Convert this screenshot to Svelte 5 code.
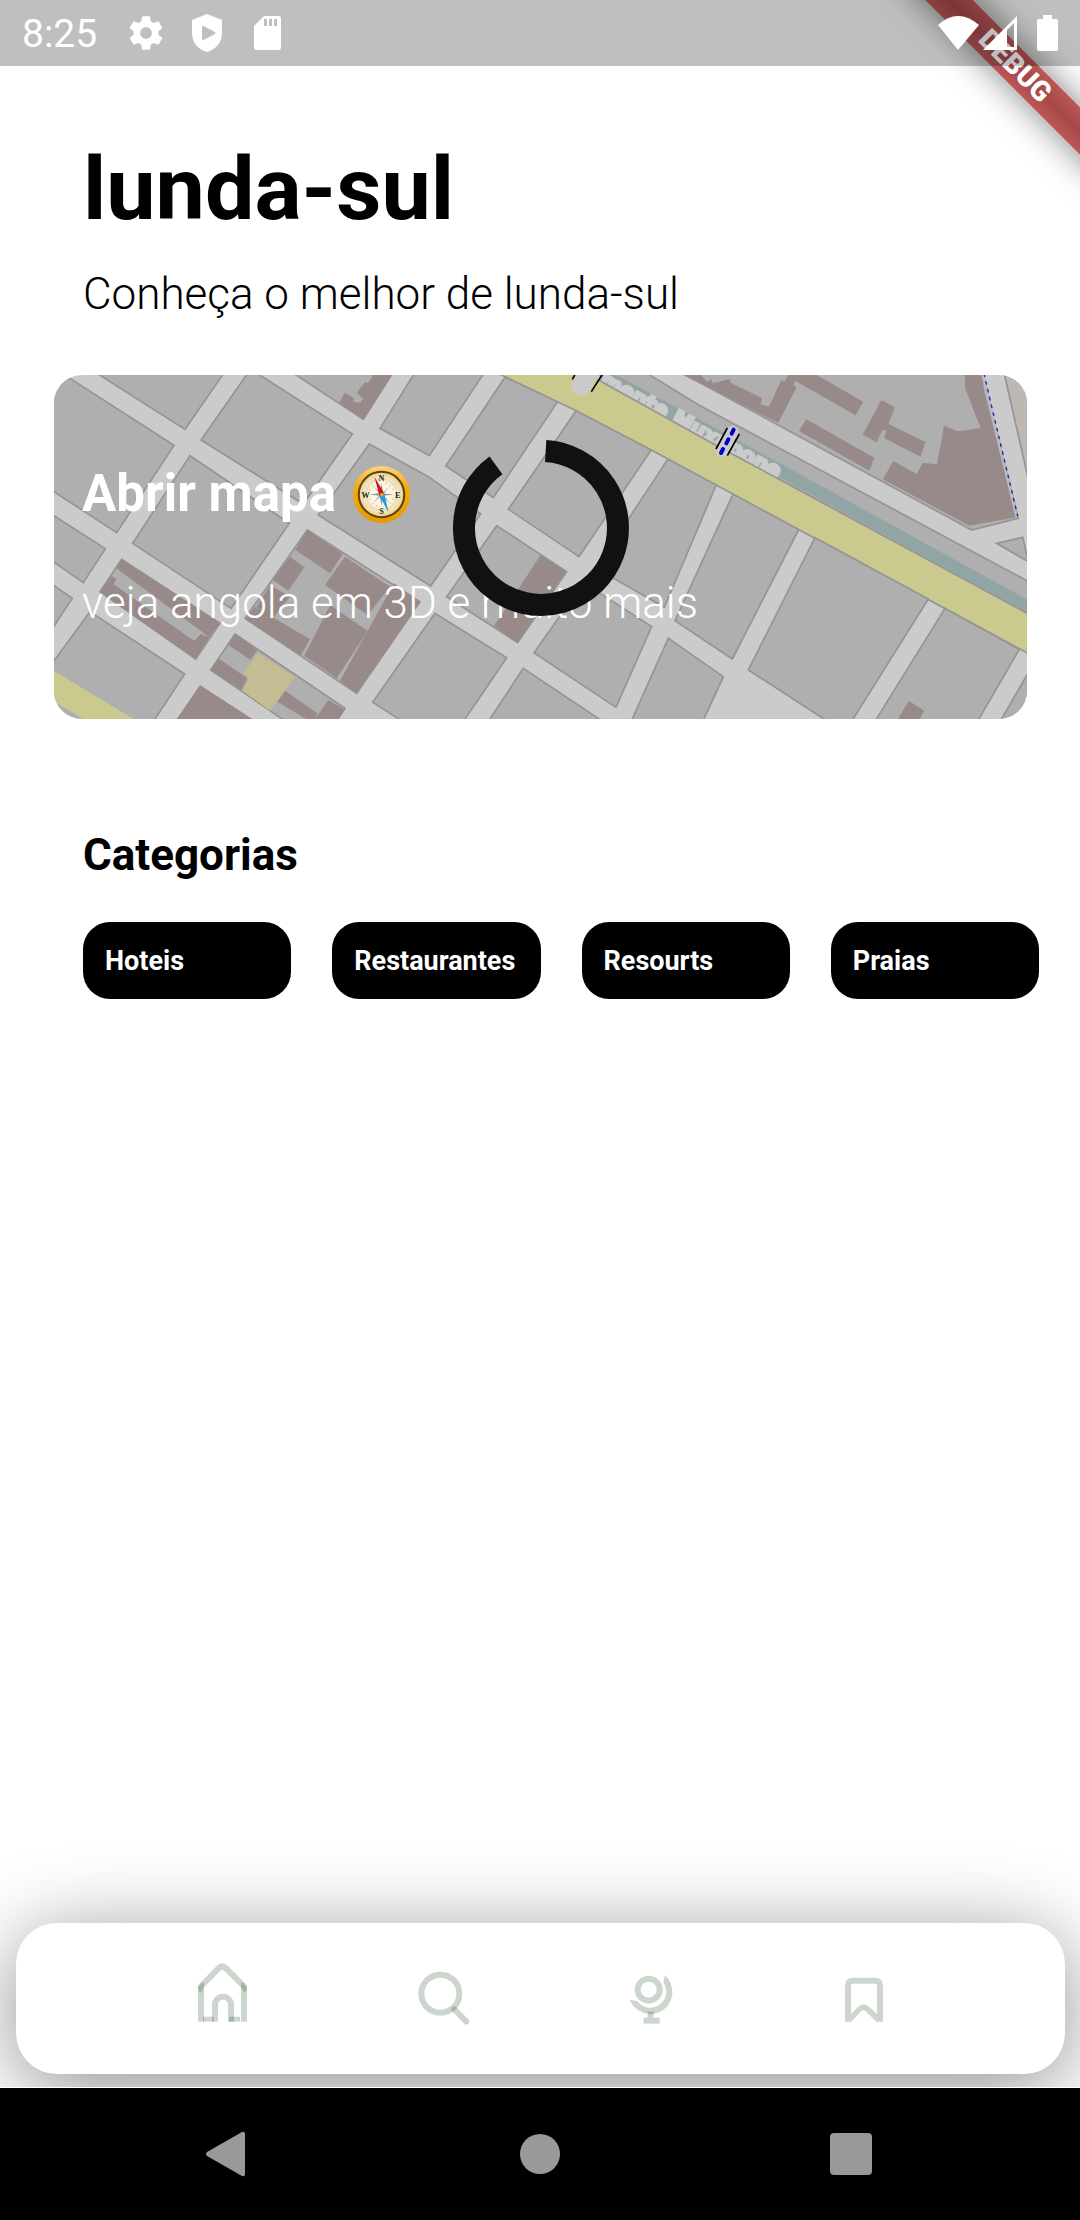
<script>
  const categories = ['Hoteis', 'Restaurantes', 'Resourts', 'Praias'];
  const ticks = [22, 45, 67, 112, 135, 157, 202, 225, 247, 292, 315, 337];
</script>

<div class="screen">
  <div class="banner" aria-hidden="true"><span>DEBUG</span></div>

  <header class="status">
    <time>8:25</time>
    <div class="left-icons">
      <svg viewBox="0 0 24 24"><path d="M19.43 12.98c.04-.32.07-.64.07-.98s-.03-.66-.07-.98l2.11-1.65c.19-.15.24-.42.12-.64l-2-3.46c-.12-.22-.39-.3-.61-.22l-2.49 1c-.52-.4-1.08-.73-1.69-.98l-.38-2.65C14.46 2.18 14.25 2 14 2h-4c-.25 0-.46.18-.49.42l-.38 2.65c-.61.25-1.17.59-1.69.98l-2.49-1c-.23-.09-.49 0-.61.22l-2 3.46c-.13.22-.07.49.12.64l2.11 1.65c-.04.32-.07.65-.07.98s.03.66.07.98l-2.11 1.65c-.19.15-.24.42-.12.64l2 3.46c.12.22.39.3.61.22l2.49-1c.52.4 1.08.73 1.69.98l.38 2.65c.03.24.24.42.49.42h4c.25 0 .46-.18.49-.42l.38-2.65c.61-.25 1.17-.59 1.69-.98l2.49 1c.23.09.49 0 .61-.22l2-3.46c.12-.22.07-.49-.12-.64l-2.11-1.65zM12 15.5c-1.93 0-3.5-1.57-3.5-3.5s1.57-3.5 3.5-3.5 3.5 1.57 3.5 3.5-1.57 3.5-3.5 3.5z" /></svg>
      <svg viewBox="0 0 40 40"><path fill-rule="evenodd" d="M20 1 35 7V20C35 30 28 37 20 39 12 37 5 30 5 20V7ZM15 14V26Q15 27.500 16.500 27L28 21Q29 20 28 19L16.500 13Q15 12.500 15 14Z" /></svg>
      <svg viewBox="0 0 40 40"><path fill-rule="evenodd" d="M16 3H31Q33 3 33 6V34Q33 37 31 37H9Q6 37 6 34V13ZM16 6V13H19V6ZM21 6V13H24V6ZM26 6V13H29V6Z" /></svg>
    </div>
    <div class="right-icons">
      <svg class="wifi" viewBox="0 0 41 34"><path d="M0 9Q20-9 41 9L20 34Z" /></svg>
      <svg class="signal" viewBox="0 0 34 34"><path fill-rule="evenodd" d="M34 0V34H0ZM24 14V31H31V7Z" /></svg>
      <svg class="battery" viewBox="0 0 21 36"><path d="M6 0H15V4H19Q21 4 21 6V34Q21 36 19 36H2Q0 36 0 34V6Q0 4 2 4H6Z" /></svg>
    </div>
  </header>

  <main>
    <h1>lunda-sul</h1>
    <p class="subtitle">Conheça o melhor de lunda-sul</p>

    <button class="map-card" type="button">
      <svg class="map" viewBox="0 0 2919 1032" preserveAspectRatio="xMidYMid slice" aria-hidden="true">
        <g transform="translate(-42 -45)">
          <g class="block">
            <path d="M0 0 90 55 402 256 230 518 0 368Z" />
            <path d="M160 33 435 208 556 33Z" />
            <path d="M628 33 483 240 790 432 937 222 640 33Z" />
            <path d="M750 33 970 178 1062 33Z" />
            <path d="M450 287 278 550 573 745 748 490Z" />
            <path d="M0 440 196 566 130 668 0 578Z" />
            <path d="M0 648 97 715 0 862Z" />
            <path d="M245 598 180 695 467 897 540 790Z" />
            <path d="M150 755 434 942 330 1100 0 1100V960Z" />
            <path d="M585 822 512 930 760 1100 880 1100 915 1045Z" />
            <path d="M802 510 615 775 950 1000 1140 725Z" />
            <path d="M988 252 835 465 1172 678 1322 462 1165 350Z" />
            <path d="M1128 33 1020 205 1168 287 1336 33Z" />
            <path d="M1185 760 998 1027 1100 1092 1265 1092 1400 893Z" />
          </g>
          <g class="building">
            <path d="M1056 45 970 178 898 128 914 98 942 114 938 124 960 128 970 116 950 98 975 66 984 70 1000 45Z" />
            <path d="M245 598 540 790 508 832 229 625Z" />
            <path d="M180 695 215 648 230 658 220 672 463 843 482 822 508 832 467 897Z" />
            <path d="M480 975 400 1092H660Z" />
            <path d="M585 822 652 870 632 900 565 855Z" />
            <path d="M535 895 622 955 605 990 512 930Z" />
            <path d="M735 992 832 1060 820 1090 712 1025Z" />
            <path d="M865 1020 913 1048 885 1092 815 1092Z" />
            <path d="M802 510 908 582 870 640 766 570Z" />
            <path d="M750 590 793 622 745 692 698 660Z" />
            <path d="M690 675 750 710 692 782 650 740Z" />
            <path d="M645 740 810 838 783 885 615 778Z" />
            <path d="M915 590 1050 680 983 765 855 675Z" />
            <path d="M870 735 983 813 890 955 793 887Z" />
            <path d="M1062 670 1140 725 950 1000 900 962Z" />
          </g>
          <path class="tan" d="M652 878 765 950 690 1052 607 992 628 955 612 940Z" />
          <path class="avenue" d="M0 908 280 1077 310 1100H170L0 1000Z" />
        </g>

        <g transform="translate(978 -45)">
          <g class="block">
            <path d="M375 52 197 318 340 413 535 122Z" />
            <path d="M590 150 385 448 597 590 815 268Z" />
            <path d="M865 295 648 625 853 742 1010 372Z" />
            <path d="M350 497 200 710 413 848 560 635Z" />
            <path d="M610 668 462 878 708 1042 815 800Z" />
            <path d="M430 925 320 1092H680Z" />
            <path d="M865 835 750 1092H965L1030 950Z" />
            <path d="M1060 400 885 782 1057 897 1257 507Z" />
            <path d="M640 33H790L960 137 1941 662 1990 690V790L1000 250Z" />
          </g>
          <path class="building" d="M482 585 558 635 413 848 342 798Z" />
          <path class="water" d="M665 40H700L960 180 1200 310 1990 745V785L1150 325 655 62Z" />
          <path class="avenue-edge" d="M360 40 590 150 815 268 1060 400 1960 886" />
          <text class="street" transform="translate(656 72) rotate(28)">mente Muxapone</text>
          <path class="avenue" d="M360 33 360 40 590 150 815 268 1060 400 1960 886V770L1090 300 1005 254 655 60 630 33Z" />
          <path class="edge" d="M655 60 1005 254 1090 300 1960 770" />
          <path class="bridge-wide" d="M604 77 634 20" />
          <path class="rail" d="M577 58 588 38M634 95 672 35" />
        </g>

        <g transform="translate(1938 -45)">
          <g class="block">
            <path d="M-70 33 0 68 815 510 955 475 845 33Z" />
            <path d="M345 533 145 930 395 1092H450L685 717Z" />
            <path d="M735 745 520 1092H828L958 868Z" />
            <path d="M1000 912 896 1092H1000Z" />
            <path d="M890 550 968 532 985 605Z" />
            <path class="beige" d="M911 33 990 380V33Z" />
          </g>
          <g class="building">
            <path d="M-60 40 0 68 170 156 235 188 290 82 280 75 285 62 467 166 490 125 350 45 330 33H270L255 62 243 62 207 140 182 133 187 115 92 68 90 57 38 70 35 58 20 66 0 40Z" />
            <path d="M319 178 523 293 508 332 297 213Z" />
            <path d="M544 120 585 142 565 192 677 246 662 290 553 235 558 212 547 210 530 247 488 224Z" />
            <path d="M795 33H845L852 90 948 472 808 497 548 358 580 303 650 342 668 308 711 313 732 197 773 214 842 204 795 85Z" />
            <path d="M626 1022 673 1052 650 1092H586Z" />
          </g>
          <path class="path-bed" d="M848 40 862 100 950 470" />
          <path class="footpath" d="M852 40 868 110 953 468" />
          <path class="bridge" d="M98 215 65 273" />
          <path class="rail" d="M82 204 48 267M118 222 82 287" />
          <path class="dots" d="M101 209 95 221M85 238 79 250M69 267 63 279" />
        </g>
      </svg>

      <span class="card-title">
        Abrir mapa
        <svg class="compass" viewBox="0 0 168 168" aria-hidden="true">
          <defs>
            <linearGradient id="rim" x1="0" y1="0" x2="0" y2="1">
              <stop offset="0" stop-color="#ffd37a" />
              <stop offset=".35" stop-color="#f5ab12" />
              <stop offset="1" stop-color="#e89a00" />
            </linearGradient>
            <radialGradient id="face">
              <stop offset="0" stop-color="#ffffff" />
              <stop offset=".6" stop-color="#fdf1d4" />
              <stop offset="1" stop-color="#e9cf91" />
            </radialGradient>
          </defs>
          <circle cx="84" cy="84" r="84" fill="url(#rim)" />
          <circle cx="84" cy="84" r="67" fill="url(#face)" stroke="#5b450c" stroke-width="6" />
          <circle cx="84" cy="84" r="46" fill="none" stroke="#c9c3b3" stroke-width="2" />
          {#each ticks as angle}
            <path d="M84 44V50" stroke="#b5b0a5" stroke-width="2" transform="rotate({angle} 84 84)" />
          {/each}
          <path d="M84 50 89 79 108 60 91 81 120 84 91 88 108 108 88 91 84 118 79 91 60 108 77 88 48 84 77 80 60 60 80 78Z" fill="#8e989c" />
          <path d="M63 32 92 80 78 87Z" fill="#d8101c" />
          <path d="M105 138 78 87 92 80Z" fill="#1b9fe0" />
          <circle cx="85" cy="84" r="5" fill="#f6a21a" />
          <g class="points">
            <text x="84" y="43">N</text>
            <text x="84" y="142">S</text>
            <text x="37" y="93">W</text>
            <text x="132" y="93">E</text>
          </g>
        </svg>
      </span>
      <span class="card-text">veja angola em 3D e muito mais</span>
      <svg class="spinner" viewBox="0 0 528 528" aria-hidden="true"><path d="M278 33A231 231 0 1 1 129 76" /></svg>
    </button>

    <h2>Categorias</h2>
    <div class="chips">
      {#each categories as name}
        <button type="button">{name}</button>
      {/each}
    </div>
  </main>

  <nav class="tabs">
    <button type="button" aria-label="Início">
      <svg viewBox="15 61 288 288">
        <path class="fill" d="M84 273V168L96 156H102V273Z" />
        <path class="fill" d="M231 273V168L219 156H213V273Z" />
        <path class="fill" d="M92 187Q84 182 84 168 86 162 90 157L143 103Q157 93 171 103L225 157Q231 163 231 176L224 187Q219 176 209 167L161 119Q157 115 153 119L106 166Q96 176 92 187Z" />
        <path d="M135 273V222A24 24 0 0 1 183 222V273" />
        <path class="fill" d="M99 258H132V273H99Z" />
        <path class="fill" d="M177 258H210V273H177Z" />
      </svg>
    </button>
    <button type="button" aria-label="Pesquisar">
      <svg viewBox="656 61 288 288">
        <circle cx="810" cy="189" r="57" />
        <path class="round" d="M852 236 888 273" />
      </svg>
    </button>
    <button type="button" aria-label="Explorar">
      <svg viewBox="7 61 288 288">
        <circle cx="147" cy="177" r="33" />
        <path class="fill" d="M89 207 112 211Q130 232 152 231A48 50 0 0 0 200 180Q200 166 191 156L196 133Q218 155 218 187A67 63 0 0 1 150 250Q110 246 89 207Z" />
        <path class="fill" d="M144 243H162V261H144Z" />
        <path class="fill" d="M132 261H180V279H132Z" />
      </svg>
    </button>
    <button type="button" aria-label="Guardados">
      <svg viewBox="648 61 288 288">
        <path class="fill" d="M735 273V165Q735 141 759 141H825Q849 141 849 165V273H829L796 241Q790 236 784 241L754 273ZM753 250 778 225Q790 216 803 225L831 250V162Q831 159 828 159H756Q753 159 753 162Z" />
      </svg>
    </button>
  </nav>

  <footer class="system">
    <button type="button" aria-label="Voltar"><svg viewBox="0 0 48 48"><path d="M3 22 38 2Q41 1 41 4V44Q41 47 38 46L3 26Q1 24 3 22Z" /></svg></button>
    <button type="button" aria-label="Tela inicial"><svg viewBox="0 0 48 48"><circle cx="24" cy="24" r="20" /></svg></button>
    <button type="button" aria-label="Recentes"><svg viewBox="0 0 48 48"><rect x="2" y="3" width="42" height="42" rx="4" /></svg></button>
  </footer>
</div>

<style>
  :global(body) {
    margin: 0;
    background: #fff;
    font-family: Roboto, sans-serif;
    color: #000;
  }
  .screen {
    position: relative;
    display: flex;
    flex-direction: column;
    min-height: 100vh;
    overflow: hidden;
  }
  button {
    margin: 0;
    padding: 0;
    border: 0;
    background: none;
    font: inherit;
    color: inherit;
    text-align: left;
    cursor: pointer;
  }
  svg { display: block; }

  .status {
    position: relative;
    display: flex;
    align-items: center;
    height: 66px;
    padding: 0 22px;
    background: rgba(0, 0, 0, .25);
    color: #fff;
    fill: #fff;
  }
  .status time { font-size: 39px; line-height: 48px; padding-top: 2px; }
  .left-icons { display: flex; gap: 21px; margin-left: 29px; }
  .left-icons svg { width: 40px; height: 40px; }
  .right-icons { display: flex; align-items: center; margin-left: auto; }
  .wifi { width: 41px; height: 34px; }
  .signal { width: 34px; height: 34px; margin-left: 4px; }
  .battery { width: 21px; height: 36px; margin-left: 20px; }

  .banner {
    position: absolute;
    top: 0;
    right: 0;
    width: 280px;
    height: 280px;
    overflow: hidden;
  }
  .banner span {
    position: absolute;
    top: 49px;
    right: -85px;
    width: 300px;
    transform: rotate(45deg);
    background: linear-gradient(#bb5757, #a64848, #bb5757);
    box-shadow: 0 0 34px rgba(0, 0, 0, .5);
    color: #fff;
    font-size: 28px;
    font-weight: 900;
    line-height: 34px;
    text-align: center;
  }

  main { flex: 1; padding-top: 71px; }
  h1, h2, p { margin: 0; }
  h1 { padding: 0 83px; font-size: 88px; font-weight: 700; line-height: 104px; }
  .subtitle { padding: 27px 83px 0; font-size: 44px; font-weight: 300; line-height: 52px; }

  .map-card {
    position: relative;
    display: flex;
    flex-direction: column;
    width: calc(100% - 107px);
    margin: 55px 53px 0 54px;
    padding: 89px 28px 90px;
    border-radius: 28px;
    overflow: hidden;
    background: #cbcbcb;
    color: #fff;
  }
  .map { position: absolute; inset: 0; width: 100%; height: 100%; }
  .block { fill: #afafaf; stroke: #949494; stroke-width: 5; }
  .beige { fill: #bdb8b2; }
  .building { fill: #998a8a; }
  .tan { fill: #c4bc92; }
  .water { fill: #91a5a5; }
  .avenue { fill: #cbca8e; }
  .avenue-edge { fill: none; stroke: #949494; stroke-width: 10; }
  .edge { fill: none; stroke: #949494; stroke-width: 5; }
  .street { fill: #cbcbcb; stroke: #cbcbcb; stroke-width: 8; font: 700 62px "DejaVu Sans", sans-serif; }
  .bridge, .bridge-wide { fill: none; stroke: #cbcbcb; stroke-width: 36; stroke-linecap: round; }
  .bridge-wide { stroke-width: 60; }
  .rail { fill: none; stroke: #000; stroke-width: 5; }
  .dots { fill: none; stroke: #0000cb; stroke-width: 12; stroke-linecap: round; }
  .path-bed { fill: none; stroke: #b9b9b9; stroke-width: 9; }
  .footpath { fill: none; stroke: #1f1fc4; stroke-width: 4; stroke-dasharray: 11 13; }

  .card-title {
    position: relative;
    display: flex;
    align-items: center;
    gap: 17px;
    font-size: 51px;
    font-weight: 700;
    line-height: 60px;
  }
  .compass { width: 57px; height: 57px; }
  .points { font: 700 24px "Liberation Serif", serif; fill: #222; text-anchor: middle; }
  .card-text { position: relative; margin-top: 53px; font-size: 44px; font-weight: 300; line-height: 52px; }
  .spinner {
    position: absolute;
    top: 65px;
    left: 50%;
    width: 176px;
    height: 176px;
    transform: translateX(-50%);
    fill: none;
    stroke: #111;
    stroke-width: 66;
  }

  h2 { padding: 110px 83px 0; font-size: 44px; font-weight: 700; line-height: 52px; }
  .chips {
    display: grid;
    grid-template-columns: repeat(4, minmax(0, 1fr));
    gap: 41px;
    padding: 41px 41px 0 83px;
  }
  .chips button {
    height: 77px;
    padding: 0 22px;
    border-radius: 27px;
    background: #000;
    color: #fff;
    font-size: 27px;
    font-weight: 700;
    white-space: nowrap;
  }

  .tabs {
    display: grid;
    grid-template-columns: repeat(4, 1fr);
    align-items: center;
    height: 151px;
    margin: 0 15px 13px 16px;
    padding: 0 94px 0 100px;
    box-sizing: border-box;
    border-radius: 41px;
    background: #fff;
    box-shadow: 0 14px 84px rgba(0, 0, 0, .45);
  }
  .tabs button, .system button { display: flex; justify-content: center; }
  .tabs svg { width: 96px; height: 96px; fill: none; stroke: rgba(5, 50, 0, .2); stroke-width: 18; }
  .tabs .fill { fill: rgba(5, 50, 0, .2); fill-rule: evenodd; stroke: none; }
  .tabs .round { stroke-linecap: round; }

  .system {
    position: relative;
    display: grid;
    grid-template-columns: repeat(3, 1fr);
    align-items: center;
    height: 132px;
    padding: 0 72px;
    border-top: 1px solid #fff;
    background: #000;
    fill: #999;
  }
  .system svg { width: 48px; height: 48px; }
</style>
